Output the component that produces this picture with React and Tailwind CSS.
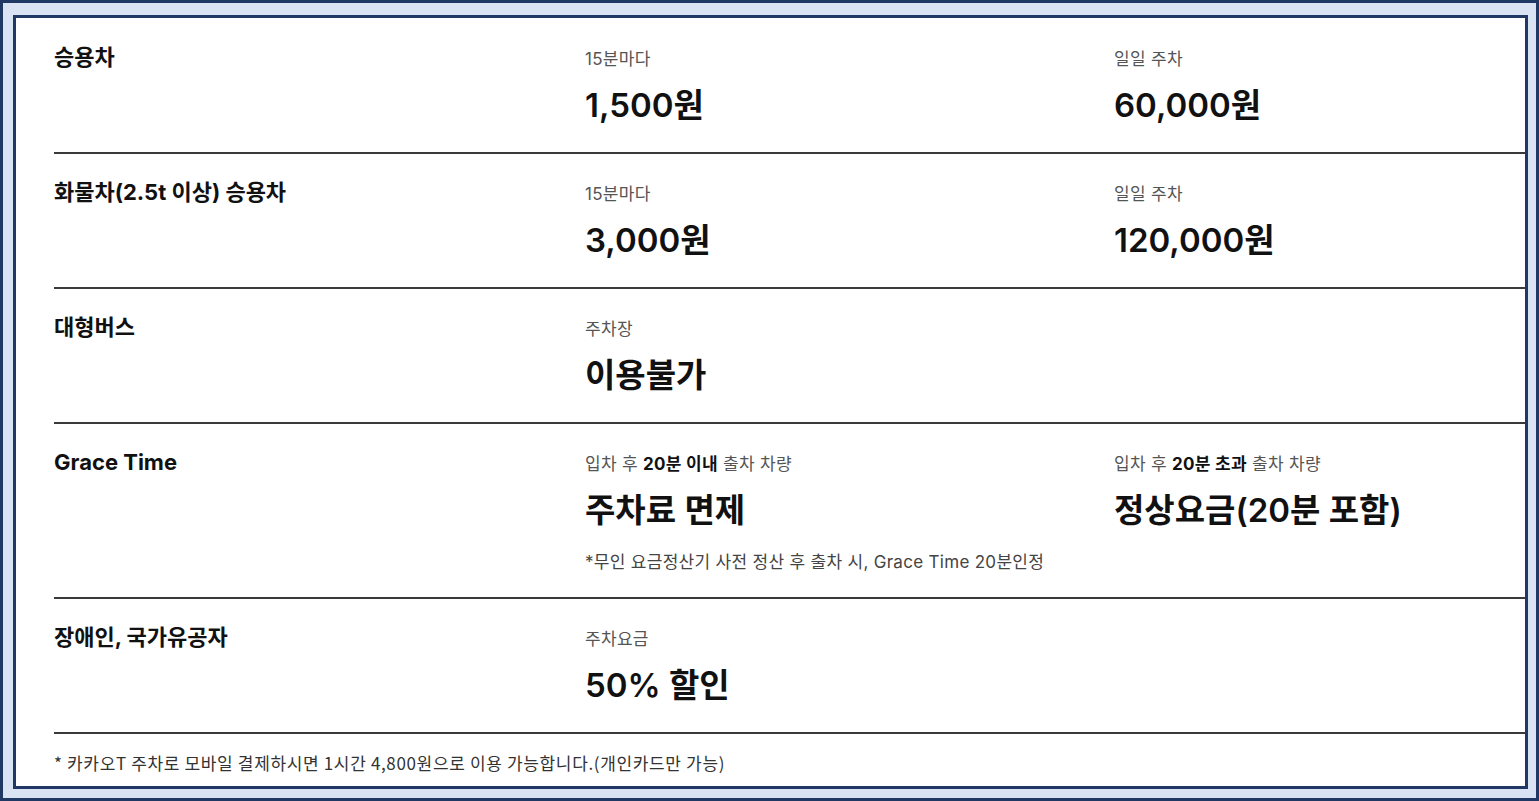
import React from "react";

const font = { fontFamily: '"Inter", "Noto Sans CJK KR", sans-serif' };

function Cell({ label, value, note }) {
  return (
    <div className="flex flex-col">
      <div className="mt-[5px] text-[17px] leading-[22px] text-[#555] tracking-[0.3px]">{label}</div>
      <div className="mt-[15px] text-[33px] leading-[40px] font-semibold text-[#111]">{value}</div>
      {note && <div className="mt-[20px] text-[17px] leading-[24px] text-[#444] tracking-[0.3px]">{note}</div>}
    </div>
  );
}

function Row({ title, c2, c3, pb = "pb-[27px]" }) {
  return (
    <div className={`grid grid-cols-[531px_529px_1fr] pt-[24px] ${pb} border-b-2 border-[#3a3a3a]`}>
      <div className="-mt-[1px] text-[22px] leading-[30px] font-bold text-[#111]">{title}</div>
      <div>{c2}</div>
      <div>{c3}</div>
    </div>
  );
}

export default function App() {
  return (
    <div className="w-[1539px] h-[801px] bg-[#dae3f3] border-[3px] border-[#1f3864] pl-[10px] pr-[8px] pt-[12px] pb-[9px]" style={font}>
      <div className="w-full h-full bg-white border-[3px] border-[#1f3864] pl-[38px] pt-[1px] overflow-hidden">
        <Row title="승용차" c2={<Cell label="15분마다" value="1,500원" />} c3={<Cell label="일일 주차" value="60,000원" />} />
        <Row title="화물차(2.5t 이상) 승용차" c2={<Cell label="15분마다" value="3,000원" />} c3={<Cell label="일일 주차" value="120,000원" />} />
        <Row title="대형버스" c2={<Cell label="주차장" value="이용불가" />} />
        <Row
          title="Grace Time"
          pb="pb-[23px]"
          c2={
            <Cell
              label={<>입차 후 <b className="text-[#111]">20분 이내</b> 출차 차량</>}
              value="주차료 면제"
              note="*무인 요금정산기 사전 정산 후 출차 시, Grace Time 20분인정"
            />
          }
          c3={<Cell label={<>입차 후 <b className="text-[#111]">20분 초과</b> 출차 차량</>} value="정상요금(20분 포함)" />}
        />
        <Row title="장애인, 국가유공자" c2={<Cell label="주차요금" value="50% 할인" />} />
        <div className="pt-[18px] text-[17px] leading-[22px] text-[#333] tracking-[0.65px]" style={{ fontFamily: '"Noto Sans CJK KR", sans-serif' }}>
          * 카카오T 주차로 모바일 결제하시면 1시간 4,800원으로 이용 가능합니다.(개인카드만 가능)
        </div>
      </div>
    </div>
  );
}
